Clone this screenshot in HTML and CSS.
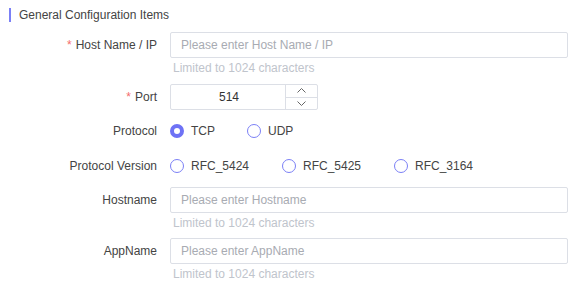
FILE: index.html
```html
<!DOCTYPE html>
<html lang="en">
<head>
    <meta charset="UTF-8">
    <title>General Configuration Items</title>
    <link rel="stylesheet" href="styles.css">
</head>
<body>

    <div class="section-title">General Configuration Items</div>

    <form class="form">
        <div class="form-item gap-6">
            <label class="form-label required">Host Name / IP</label>
            <div class="form-content">
                <input class="input-field" type="text" placeholder="Please enter Host Name / IP">
                <div class="hint">Limited to 1024 characters</div>
            </div>
        </div>

        <div class="form-item gap-8">
            <label class="form-label required">Port</label>
            <div class="form-content">
                <div class="number-input">
                    <span class="number-value">514</span>
                    <div class="stepper">
                        <span class="step">
                            <svg width="9" height="5" viewBox="0 0 9 5"><path d="M0.5 4.5 L4.5 0.5 L8.5 4.5" fill="none" stroke="#666" stroke-width="1"/></svg>
                        </span>
                        <span class="step step-down">
                            <svg width="9" height="5" viewBox="0 0 9 5"><path d="M0.5 0.5 L4.5 4.5 L8.5 0.5" fill="none" stroke="#666" stroke-width="1"/></svg>
                        </span>
                    </div>
                </div>
            </div>
        </div>

        <div class="form-item gap-9">
            <label class="form-label">Protocol</label>
            <div class="form-content radio-group">
                <span class="radio w-77"><span class="radio-dot checked"></span>TCP</span>
                <span class="radio"><span class="radio-dot"></span>UDP</span>
            </div>
        </div>

        <div class="form-item gap-8">
            <label class="form-label">Protocol Version</label>
            <div class="form-content radio-group">
                <span class="radio w-112"><span class="radio-dot"></span>RFC_5424</span>
                <span class="radio w-112"><span class="radio-dot"></span>RFC_5425</span>
                <span class="radio"><span class="radio-dot"></span>RFC_3164</span>
            </div>
        </div>

        <div class="form-item gap-5">
            <label class="form-label">Hostname</label>
            <div class="form-content">
                <input class="input-field" type="text" placeholder="Please enter Hostname">
                <div class="hint">Limited to 1024 characters</div>
            </div>
        </div>

        <div class="form-item">
            <label class="form-label">AppName</label>
            <div class="form-content">
                <input class="input-field" type="text" placeholder="Please enter AppName">
                <div class="hint">Limited to 1024 characters</div>
            </div>
        </div>
    </form>

</body>
</html>
```

FILE: styles.css
```css
body {
    font-family: 'Liberation Sans', Arial, sans-serif;
    font-size: 12px;
    color: #333;
    background-color: #fff;
    margin: 0;
    padding: 8px 0 0 9px;
}

.section-title {
    border-left: 2px solid #7b80f6;
    padding-left: 8px;
    height: 14px;
    line-height: 14px;
    color: #444;
    margin-bottom: 10px;
}

.form-item {
    display: flex;
    align-items: flex-start;
}

.gap-5 { margin-bottom: 5px; }
.gap-6 { margin-bottom: 6px; }
.gap-8 { margin-bottom: 8px; }
.gap-9 { margin-bottom: 9px; }

.form-label {
    width: 148px;
    text-align: right;
    line-height: 26px;
    color: #444;
    padding-right: 13px;
}

.form-label.required::before {
    content: "*";
    color: #f56c6c;
    margin-right: 4px;
}

.form-content {
    width: 398px;
}

.input-field {
    display: block;
    width: 100%;
    height: 26px;
    padding: 0 10px;
    font-family: inherit;
    font-size: 12px;
    color: #333;
    border: 1px solid #dcdfe6;
    border-radius: 2px;
    box-sizing: border-box;
    outline: none;
}

.input-field::placeholder {
    color: #a8abb2;
}

.hint {
    height: 20px;
    line-height: 20px;
    padding-left: 3px;
    color: #c0c4cc;
}

.number-input {
    display: flex;
    width: 148px;
    height: 26px;
    border: 1px solid #dcdfe6;
    border-radius: 2px;
    box-sizing: border-box;
}

.number-value {
    flex: 1;
    text-align: center;
    line-height: 24px;
    color: #333;
    padding-left: 2px;
}

.stepper {
    width: 31px;
    display: flex;
    flex-direction: column;
    border-left: 1px solid #dcdfe6;
}

.step {
    flex: 1;
    display: flex;
    align-items: center;
    justify-content: center;
}

.step-down {
    border-top: 1px solid #dcdfe6;
}

.radio-group {
    display: flex;
    align-items: center;
    height: 26px;
}

.radio {
    display: flex;
    align-items: center;
    color: #444;
}

.w-77 { width: 77px; }
.w-112 { width: 112px; }

.radio-dot {
    width: 14px;
    height: 14px;
    border: 1px solid #7b80f6;
    border-radius: 50%;
    box-sizing: border-box;
    margin-right: 7px;
}

.radio-dot.checked {
    border: 4px solid #6e72f5;
}
```
